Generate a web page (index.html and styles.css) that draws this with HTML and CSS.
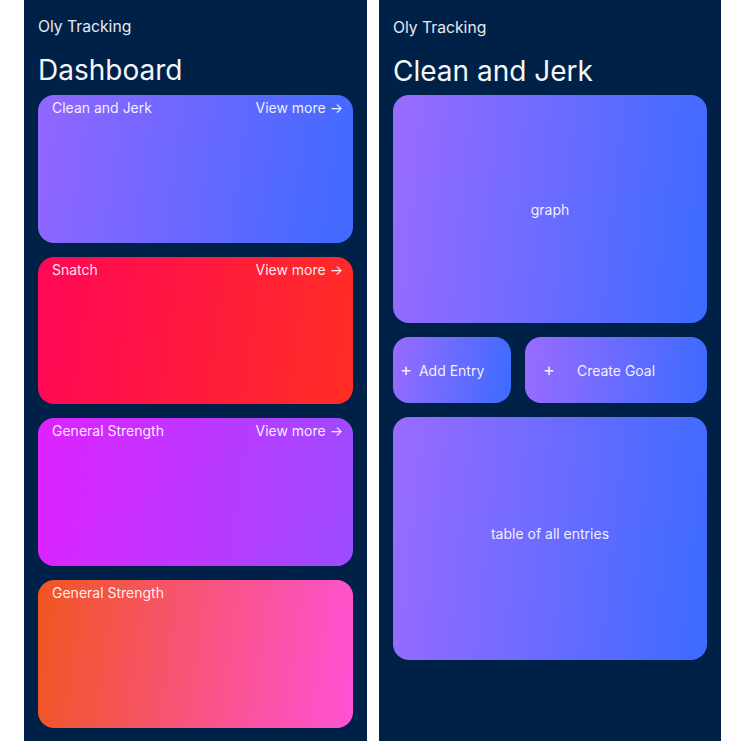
FILE: index.html
```html
<!DOCTYPE html>
<html lang="en">
<head>
<meta charset="utf-8">
<title>Oly Tracking</title>
<link rel="stylesheet" href="styles.css">
</head>
<body>
<div class="screens">
  <section class="panel panel-left">
    <div class="app-name">Oly Tracking</div>
    <h1 class="title">Dashboard</h1>
    <div class="cards">
      <div class="card card-cj">
        <span>Clean and Jerk</span><span>View more →</span>
      </div>
      <div class="card card-snatch">
        <span>Snatch</span><span>View more →</span>
      </div>
      <div class="card card-gs">
        <span>General Strength</span><span>View more →</span>
      </div>
      <div class="card card-gs2">
        <span>General Strength</span>
      </div>
    </div>
  </section>
  <section class="panel panel-right">
    <div class="app-name app-name-r">Oly Tracking</div>
    <h1 class="title title-r">Clean and Jerk</h1>
    <div class="detail">
      <div class="box graph">graph</div>
      <div class="actions">
        <div class="box btn btn-add"><span class="plus">+</span>Add Entry</div>
        <div class="box btn btn-goal"><span class="plus">+</span>Create Goal</div>
      </div>
      <div class="box table">table of all entries</div>
    </div>
  </section>
</div>
</body>
</html>
```
FILE: styles.css
```css
html, body {
  margin: 0;
  padding: 0;
  background: #ffffff;
  font-family: "Inter", "Noto Sans", sans-serif;
}
.screens {
  display: flex;
  gap: 12px;
  padding-left: 24px;
  height: 741px;
  overflow: hidden;
}
.panel {
  background: #002147;
  color: #eef1f6;
  padding: 17px 14px 0 14px;
  box-sizing: border-box;
  height: 741px;
}
.panel-left { width: 343px; }
.panel-right { width: 342px; }
.app-name {
  font-size: 15.7px;
  line-height: 20px;
  color: #e6eaf0;
}
.app-name-r { margin-top: 1px; }
.title {
  margin: 16px 0 8px 0;
  font-size: 28px;
  line-height: 34px;
  font-weight: 400;
  color: #f4f6fa;
}
.title-r { margin-bottom: 7px; }
.cards {
  display: flex;
  flex-direction: column;
  gap: 14px;
}
.card {
  height: 147.7px;
  border-radius: 16px;
  display: flex;
  justify-content: space-between;
  align-items: flex-start;
  padding: 4px 10px 0 14px;
  box-sizing: border-box;
  font-size: 14px;
  line-height: 18px;
  color: rgba(255,255,255,0.92);
}
.card-cj { background: linear-gradient(98deg, #9266ff 0%, #3e6aff 100%); }
.card-snatch { background: linear-gradient(98deg, #ff0757 0%, #ff2d24 100%); }
.card-gs { background: linear-gradient(98deg, #de22ff 0%, #9c4cff 100%); }
.card-gs2 { background: linear-gradient(98deg, #f0561f 0%, #ff52d8 100%); }

.detail {
  display: flex;
  flex-direction: column;
  gap: 14px;
}
.box {
  border-radius: 16px;
  background: linear-gradient(96deg, #9a6bff 0%, #3c6bff 100%);
  color: rgba(255,255,255,0.92);
  font-size: 14px;
  display: flex;
  align-items: center;
  box-sizing: border-box;
}
.graph {
  height: 228px;
  justify-content: center;
}
.actions {
  display: flex;
  gap: 14px;
}
.btn {
  height: 66px;
}
.btn-add {
  width: 118px;
  padding-left: 7px;
  background: linear-gradient(100deg, #9a6bff 0%, #3c6bff 100%);
}
.btn-goal {
  flex: 1;
  padding-left: 18px;
}
.plus {
  font-size: 18px;
  margin-right: 7px;
  line-height: 1;
}
.btn-goal .plus { margin-right: 22px; }
.table {
  height: 243px;
  justify-content: center;
  padding-bottom: 10px;
}
```
